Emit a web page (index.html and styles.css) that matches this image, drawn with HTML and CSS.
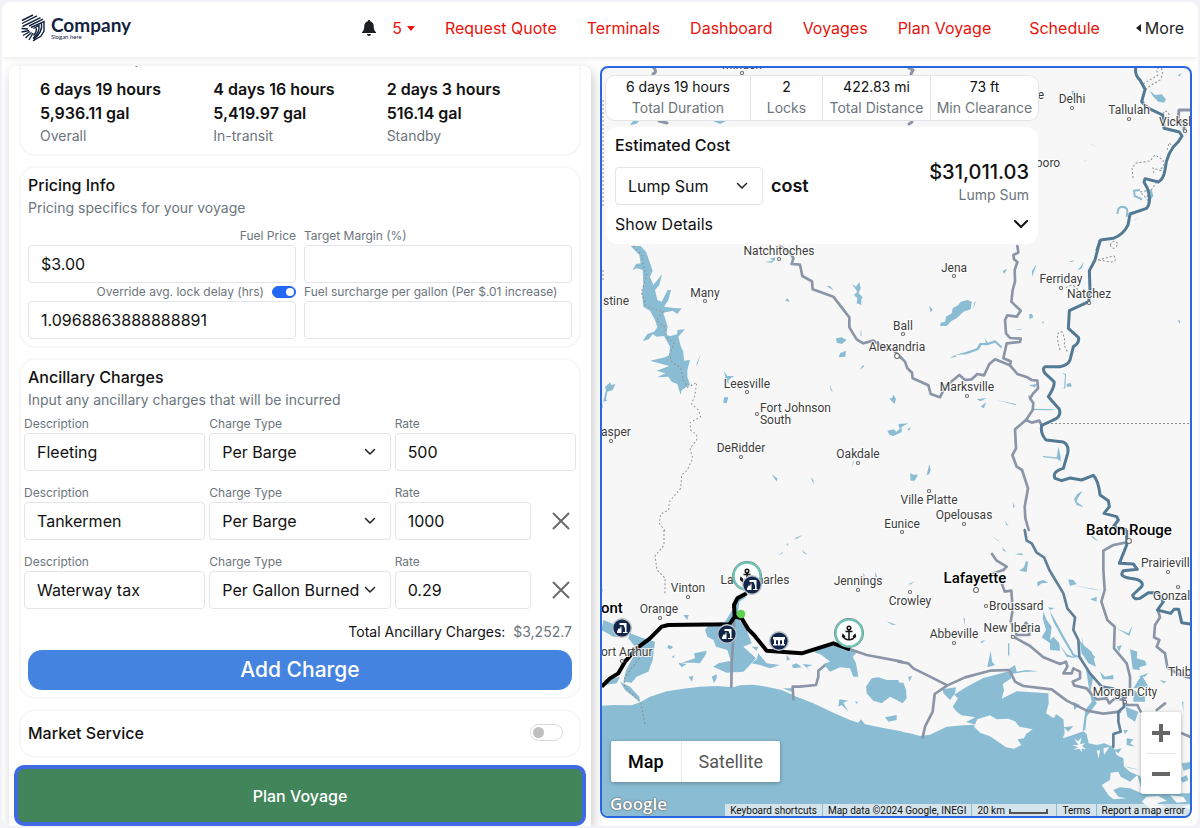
FILE: index.html
```html
<!DOCTYPE html>
<html lang="en">
<head>
    <meta charset="UTF-8">
    <meta name="viewport" content="width=device-width, initial-scale=1.0">
    <title>Plan Voyage</title>
    <link rel="stylesheet" href="styles.css">
</head>
<body>
    <div class="app">
        <header class="navbar">
            <a class="brand" href="#">
                <svg class="brand-mark" viewBox="0 0 26 28" fill="none" stroke="#14233f" stroke-width="1.4">
                    <path d="M2 6.500 13 1M2 9.500 17 1.800M2.500 12.500 20.500 3.600M9 12 23 5.200M1.500 14.500 8 15M1.500 18 9 16.500M3 21.500 10 17.500M5.500 24 11.500 18.500M9 26 13 19"/>
                    <path d="M11 13.500 24 7.500V17L21 22 13 27M13.500 14.500 19 11.500Q20 18 13 24.500M21.500 9.500Q23 18 13.500 25.500M16 14Q17.500 17 13.500 21.500"/>
                </svg>
                <span class="brand-text">
                    <span class="brand-name">Company</span>
                    <span class="brand-slogan">Slogan here</span>
                </span>
            </a>
            <nav class="nav-links">
                <a class="nav-alerts" href="#">
                    <svg class="bell" viewBox="0 0 14 16"><path d="M7 0c.7 0 1.200.5 1.200 1.200C10.500 1.800 11.600 3.500 11.700 6c.1 3 .6 4.700 2.300 6.200V13H0v-.8C1.700 10.700 2.200 9 2.300 6c.1-2.500 1.200-4.200 3.500-4.800C5.800.5 6.300 0 7 0zM5 14h4c0 1-.9 2-2 2s-2-1-2-2z" fill="#1c1f23"/></svg>
                    <span>5</span>
                    <svg class="caret" viewBox="0 0 8 5"><path d="M0 0h8L4 5z" fill="#e8120c"/></svg>
                </a>
                <a href="#">Request Quote</a>
                <a href="#">Terminals</a>
                <a href="#">Dashboard</a>
                <a href="#">Voyages</a>
                <a href="#">Plan Voyage</a>
                <a class="nav-schedule" href="#">Schedule</a>
                <a class="nav-more" href="#"><svg class="caret-left" viewBox="0 0 5 8"><path d="M5 0v8L0 4z" fill="#1c1f23"/></svg>More</a>
            </nav>
        </header>

        <main class="workspace">
            <section class="planner">
                <div class="card summary">
                    <h2 class="card-title">Time Summary</h2>
                    <div class="summary-grid">
                        <div><strong>6 days 19 hours</strong><strong>5,936.11 gal</strong><span>Overall</span></div>
                        <div><strong>4 days 16 hours</strong><strong>5,419.97 gal</strong><span>In-transit</span></div>
                        <div><strong>2 days 3 hours</strong><strong>516.14 gal</strong><span>Standby</span></div>
                    </div>
                </div>

                <div class="card pricing">
                    <h2 class="card-title">Pricing Info</h2>
                    <p class="card-hint">Pricing specifics for your voyage</p>
                    <div class="pricing-grid">
                        <div class="field">
                            <div class="field-head end"><label for="fuel-price">Fuel Price</label></div>
                            <input class="control" id="fuel-price" type="text" value="$3.00">
                        </div>
                        <div class="field">
                            <div class="field-head"><label for="margin">Target Margin (%)</label></div>
                            <input class="control" id="margin" type="text">
                        </div>
                        <div class="field">
                            <div class="field-head end">
                                <label for="lock-delay">Override avg. lock delay (hrs)</label>
                                <input class="switch small" type="checkbox" aria-label="Override lock delay" checked>
                            </div>
                            <input class="control" id="lock-delay" type="text" value="1.0968863888888891">
                        </div>
                        <div class="field">
                            <div class="field-head"><label for="surcharge">Fuel surcharge per gallon (Per $.01 increase)</label></div>
                            <input class="control" id="surcharge" type="text">
                        </div>
                    </div>
                </div>

                <div class="card ancillary">
                    <h2 class="card-title">Ancillary Charges</h2>
                    <p class="card-hint">Input any ancillary charges that will be incurred</p>
                    <div class="charges">
                        <div class="charge-row">
                            <div class="field">
                                <label for="desc-1">Description</label>
                                <input class="control" id="desc-1" type="text" value="Fleeting">
                            </div>
                            <div class="field">
                                <label for="type-1">Charge Type</label>
                                <select class="control" id="type-1"><option>Per Barge</option><option>Per Gallon Burned</option></select>
                            </div>
                            <div class="field">
                                <label for="rate-1">Rate</label>
                                <input class="control" id="rate-1" type="text" value="500">
                            </div>
                        </div>
                        <div class="charge-row">
                            <div class="field">
                                <label for="desc-2">Description</label>
                                <input class="control" id="desc-2" type="text" value="Tankermen">
                            </div>
                            <div class="field">
                                <label for="type-2">Charge Type</label>
                                <select class="control" id="type-2"><option>Per Barge</option><option>Per Gallon Burned</option></select>
                            </div>
                            <div class="rate-cell">
                                <div class="field">
                                    <label for="rate-2">Rate</label>
                                    <input class="control" id="rate-2" type="text" value="1000">
                                </div>
                                <button class="remove" type="button" aria-label="Remove charge">
                                    <svg viewBox="0 0 18 18"><path d="M1.500 1.500 16.500 16.500M16.500 1.500 1.500 16.500" stroke="#6c6c6c" stroke-width="2" stroke-linecap="round"/></svg>
                                </button>
                            </div>
                        </div>
                        <div class="charge-row">
                            <div class="field">
                                <label for="desc-3">Description</label>
                                <input class="control" id="desc-3" type="text" value="Waterway tax">
                            </div>
                            <div class="field">
                                <label for="type-3">Charge Type</label>
                                <select class="control" id="type-3"><option>Per Gallon Burned</option><option>Per Barge</option></select>
                            </div>
                            <div class="rate-cell">
                                <div class="field">
                                    <label for="rate-3">Rate</label>
                                    <input class="control" id="rate-3" type="text" value="0.29">
                                </div>
                                <button class="remove" type="button" aria-label="Remove charge">
                                    <svg viewBox="0 0 18 18"><path d="M1.500 1.500 16.500 16.500M16.500 1.500 1.500 16.500" stroke="#6c6c6c" stroke-width="2" stroke-linecap="round"/></svg>
                                </button>
                            </div>
                        </div>
                    </div>
                    <p class="charges-total">Total Ancillary Charges: <span>$3,252.7</span></p>
                    <button class="add-charge" type="button">Add Charge</button>
                </div>

                <div class="card market">
                    <label class="card-title" for="market-service">Market Service</label>
                    <input class="switch" id="market-service" type="checkbox">
                </div>

                <button class="plan-voyage" type="button">Plan Voyage</button>
            </section>

            <section class="map">
                <svg class="map-canvas" viewBox="602 68 588 748" preserveAspectRatio="xMidYMid slice">
                    <!-- open water -->
                    <g class="water">
                        <g transform="translate(600 530) scale(.33333)">
                            <path d="M0 528 40 525 95 526 122 516 150 500 200 484 250 476 300 470 350 468 400 472 420 466 460 464 500 470 545 480 590 500 640 520 700 548 750 570 775 578 783 568 795 583 850 594 905 604 905 894H0z"/>
                            <path d="M90 310 130 325 165 335 158 390 145 425 110 440 95 458 70 455 78 420 100 380 105 350 85 325z"/>
                            <path d="M330 280 375 275 400 235 415 195 440 200 418 215 412 260 440 300 455 340 430 350 468 385 445 410 430 425 380 428 340 410 355 400 392 392 382 360 348 350 340 330 322 320 315 300z"/>
                            <path d="M640 365 690 345 775 362 758 380 768 400 775 440 760 440 750 415 720 412 690 425 670 402 690 395 665 375z"/>
                            <path d="M798 470 815 445 835 442 860 450 895 450 905 475 900 515 870 500 845 520 820 512 800 490zM855 562 890 555 890 570 865 575z"/>
                            <path d="M10 270 60 290 80 320 40 320 5 300zM14 450 60 440 50 460 15 465zM60 455 90 470 118 500 120 515 100 500 75 480zM250 255 266 255 262 270zM205 345 220 350 212 358 202 354zM282 370 320 362 318 372 300 400 275 398 245 398 285 385zM235 398 260 402 245 412 240 406zM265 440 280 438 276 455zM335 440 350 432 350 445 342 460zM475 370 500 400 540 405 510 415 480 405 455 400 470 388zM560 375 570 388 560 392zM575 405 590 400 605 412 580 415zM608 402 638 405 620 412 632 425zM718 508 745 512 730 518 745 545 725 525 715 530zM765 515 775 515 770 522zM455 350 475 350 470 362zM215 380 225 376 220 385zM548 475 580 475 575 485z"/>
                            <path d="M535 75 550 65 545 72zM562 38 566 48 560 44zM583 25 608 15 590 27zM605 58 622 74 612 70zM0 175 8 178 6 192 0 188zM790 128 794 138 790 140zM826 125 832 142 826 140zM860 274 890 285 875 284z"/>
                        </g>
                        <g transform="translate(900 530) scale(.33333)">
                            <path d="M-5 604 30 610 60 618 90 614 140 590 190 586 228 584 198 576 226 562 185 556 170 545 158 530 174 505 162 494 200 470 250 444 310 428 330 424 334 445 308 462 312 480 305 506 350 484 445 490 446 520 438 550 462 565 468 552 490 568 494 610 488 625 510 618 550 604 560 612 566 640 590 645 612 640 640 650 650 675 670 685 672 710 690 725 720 738 740 790 900 790 900 894H-5z"/>
                            <path d="M-5 458 10 458 18 480 20 505 8 520-5 512zM128 478 168 472 165 490 150 510 130 490zM430 245 440 270 455 290 450 330 460 320 478 340 480 362 450 360 450 340 425 322 438 300 428 265zM538 330 550 345 575 365 588 410 565 400 545 370zM690 358 712 365 710 385 735 392 740 405 718 412 720 420 698 418zM676 530 715 545 705 575 682 560zM715 440 745 428 735 440zM600 425 615 440 640 435 640 448 608 448zM700 480 735 500 735 515 700 515zM845 700 875 695 875 715 850 722zM840 745 860 735 865 750 848 758zM725 435 745 470 700 475z"/>
                            <path d="M378 92 384 96 380 126 358 122 372 112zM505 148 520 150 530 162 510 168zM412 155 430 150 445 158 425 160 412 170zM343 72 366 70 368 76zM25 162 46 154 30 164zM275 18 302 36 290 30zM305 50 320 66 310 62zM568 10 596 34 580 26zM520 165 575 178 610 182 570 175zM570 208 590 200 590 215zM444 232 464 234 450 240zM650 295 685 310 698 285 688 318zM264 400 272 362 276 395 285 405 262 412zM324 340 328 340 328 380 324 375zM330 415 345 405 350 425 380 420 415 424 370 426 335 432zM190 265 194 265 196 290zM240 335 255 330 246 340zM545 320 552 350 585 380 580 390 550 365zM650 350 665 345 658 365zM25 440 36 438 28 455zM846 515 850 515 850 545zM780 450 800 455 790 460zM448 240 465 270 495 325 522 372 550 385 520 380 490 330 460 275zM480 345 500 372 530 385 500 380z"/>
                            <path d="M558 418 580 440 572 480 590 520 560 560 556 600 548 602 556 540 575 515 566 470zM520 515 540 525 522 540zM490 592 520 588 505 605zM670 600 685 600 675 612zM680 625 700 628 690 640 705 650 680 645zM640 660 665 655 655 670zM672 708 720 720 690 715zM668 765 700 760 700 775z"/>
                        </g>
                        <g transform="translate(600 240) scale(.33333)">
                            <path d="M92 18 122 18 138 35 158 92 150 110 160 135 186 103 178 135 165 150 172 180 185 185 203 150 213 150 205 180 192 200 230 205 245 205 232 222 218 212 190 218 203 260 198 285 212 288 232 282 232 270 255 268 235 290 242 318 250 335 252 362 270 360 262 390 262 410 270 435 245 450 242 464 238 452 232 432 215 425 205 410 172 412 196 400 170 392 198 382 208 378 150 362 195 352 208 345 210 320 192 288 170 290 158 282 146 298 128 304 142 282 162 275 172 262 165 240 150 212 130 200 126 160 130 130 128 90 110 85 98 90 108 72 122 70 118 45z"/>
                            <path d="M5 505 18 450 15 440 26 432 30 425 34 435 46 432 38 450 22 455 18 478 22 482 10 485 8 505zM372 392 382 408 402 408 386 420 385 432 378 420zM372 472 385 472 380 490 370 488zM708 295 725 292 740 300 725 312 710 308zM720 340 738 332 736 350 716 352zM756 132 768 140 778 126 782 145 776 160 788 172 784 178 784 195 770 190 772 175 762 165 772 155zM680 138 690 138 702 152zM555 182 562 175 570 185zM495 66 520 62 510 56 525 52 525 60 515 68zM783 268 785 290 781 285zM778 390 790 374 792 380zM690 434 698 456 692 450zM868 476 876 474 880 464 888 476 884 492zM862 572 880 568 890 575 905 560 905 576 880 588 868 584zM515 703 532 715 530 725zM632 712 640 720 641 734zM754 686 760 662 762 664zM302 342 288 375 293 372z"/>
                        </g>
                        <g transform="translate(900 240) scale(.33333)">
                            <path d="M120 258 122 248 135 245 138 230 155 220 158 205 175 195 182 185 202 180 215 185 212 208 190 215 170 235 155 242 140 258zM222 190 228 182 220 206zM88 198 98 208 92 218zM308 92 322 86 312 102zM407 75 408 78 396 110 396 92zM506 65 524 60 516 66zM532 92 552 66 545 85zM388 222 396 222 400 232 388 238zM424 250 432 242 430 250zM345 268 368 266 360 269zM150 354 165 345 170 350zM165 345 200 335 230 325 238 310 258 308 254 295 264 308 285 300 305 318 305 326 285 308 262 316 245 315 235 330 200 343zM500 432 512 428 515 440 500 440zM480 448 492 445 495 405 485 400 498 402 496 445zM485 395 495 392zM230 478 260 474 242 484zM242 500 258 486 252 505zM290 480 348 492 345 495zM395 506 470 508 450 511 398 510zM-5 552 25 550-2 565zM22 568 32 560 28 572zM30 700 40 704 54 704 44 722 32 722zM80 705 88 672 92 690 88 702zM428 648 470 652 475 620 482 650 482 664 470 656 430 652zM522 778 532 762 548 752 532 776 530 785 552 802 530 795zM338 785 344 800 340 805zM313 840 326 858 320 856zM832 240 840 242 840 252zM386 436 410 432 405 442zM385 465 394 470 386 475z"/>
                        </g>
                        <g transform="translate(1030 60) scale(.33333)">
                            <path d="M358 92 375 105 395 103 408 118 402 128 385 125 370 110zM125 92 136 95 135 105 126 104zM174 250 202 260 188 256zM158 304 175 299 162 304zM444 46 455 38 448 50zM316 478 322 472 312 485zM388 325 400 320 395 328zM350 382 366 392 370 408 360 422 355 418 362 400z"/>
                            <path class="oxbow" d="M330 390 312 392 314 408 336 418M350 420 360 418M262 462Q262 440 278 440 298 442 290 470"/>
                        </g>
                        <path d="M633 121 639 121 636 124 630 125zM713 121 726 121 720 124zM973 74 976 76z"/>
                    </g>

                    <!-- islands and marsh -->
                    <g class="land">
                        <g transform="translate(900 530) scale(.33333)">
                            <path d="M222 590 232 568 270 556 290 568 325 566 345 574 358 590 398 598 378 612 372 625 352 628 364 645 342 656 318 652 290 632 268 618 240 608z"/>
                            <path d="M522 625 535 645 516 645 534 652 520 660 538 656 545 666 545 656 558 658 546 648 556 640 540 642 545 622 534 634zM590 662 600 660 596 685zM610 655 628 650 612 675zM605 765 630 750 632 728 655 725 662 740 690 755 712 735 722 770 725 790 690 775 660 772 640 780 655 800 680 805 640 808 625 795zM740 800 775 798 800 812 770 820 800 832 750 835 725 815zM810 796 850 800 860 815 830 818zM845 830 872 824 872 838z"/>
                        </g>
                    </g>

                    <!-- borders -->
                    <g class="border">
                        <path d="M603 100V206M603 270V280"/>
                        <g transform="translate(600 240) scale(.33333)">
                            <path d="M100 18 128 50 130 80 140 105 124 158 140 200 170 210 190 215 170 240 195 262 200 290 222 310 208 345 215 365 242 385 250 420 262 442 290 428 285 465 275 492 295 510 302 530 270 548 272 570 290 585 290 600 270 625 278 655 262 690 245 705 242 745 208 785 206 810 182 822 178 850 195 872"/>
                        </g>
                        <path d="M664 530 664 545 655 556 657 570 665 578 665 595M642 655 625 677 624 685 636 698 641 703 645 725M1047 423.500H1190"/>
                        <path d="M1143 84 1158 75Q1155 67 1160 68 1165 70 1160 80 1152 84 1145 90M1163 114Q1164 108 1169 114V122M1133 178 1132 168 1136 163 1150 161 1155 155 1163 160 1165 172 1153 168 1154 175M1167 150 1169 143 1175 148M1150 190 1140 192 1146 198 1158 180M1110 245Q1114 238 1118 244 1114 252 1110 245M1098 260 1114 256Q1118 262 1110 262zM1066 288Q1072 282 1078 290M1060 350Q1054 330 1062 332 1066 340 1064 345L1068 353"/>
                    </g>

                    <!-- waterways -->
                    <g class="river">
                        <path d="M653 67Q658 72 653 74M909 68 913 70 911 74M909 124 912 122M659 121 667 123M1190 110 1179 110 1178 120 1184 122V130"/>
                        <g transform="translate(600 240) scale(.33333)">
                            <path d="M540 18 572 40 580 55 575 72 600 74 607 108 636 124 638 148 700 170 748 232 748 262 770 298 790 310 820 302 850 322 880 330 905 355"/>
                        </g>
                        <g transform="translate(900 240) scale(.33333)">
                            <path d="M0 350 15 365 22 385 36 398 38 415 85 436 92 462 120 472 135 440 178 405 195 420 215 418 232 402 252 406 268 372 285 358 330 376 352 402 382 412 395 420 412 422 414 445 400 460 390 475 400 490 398 510 378 540 345 568 348 625 337 645 350 680 366 690 384 745 374 800 376 835 386 870"/>
                            <path d="M352 18 355 38 340 45 342 58 352 66 344 90 345 125 338 150 334 185 362 212 350 230 322 226 315 240 318 280 330 294 362 296 360 306 320 310 310 355 332 364 330 376M378 540 395 548 418 542 425 556"/>
                        </g>
                        <g transform="translate(600 530) scale(.33333)">
                            <path d="M403 275 395 400 394 470M750 358 800 375 905 395M672 408 655 422 655 440 648 465 600 470 578 470 580 508"/>
                        </g>
                        <g transform="translate(900 530) scale(.33333)">
                            <path d="M-5 395 25 400 40 415 90 440 142 466 195 442 270 422 328 420 345 455 370 468 455 478 500 512 560 542 610 551 660 545M142 466 104 492 98 545 75 590 68 622"/>
                            <path d="M276 72 290 92 320 110 310 120 280 130 300 145 314 185 334 182 338 240 332 275 345 300 350 315 388 315 386 290 378 278 366 300M336 318 390 348 430 382 480 402 498 395 502 410 490 430 515 430 520 415 540 425 540 445 518 455 522 466 560 475 572 490 590 508 620 505 628 520 645 505 672 510"/>
                            <path class="deep" d="M374 0 380 32 395 40 410 68 432 82 448 120 490 190 502 235 525 262 520 300 535 330 538 380 570 430 605 470 640 476 670 500 672 530 655 545 655 575 662 605 640 612 640 650"/>
                            <path d="M676 38 640 45 610 62 610 120 614 180 604 215 622 270 644 290 642 355 680 400 690 440 690 480 672 510 680 525 712 525 722 545M875 445 840 435 802 412 795 370 770 350 778 330 762 322 765 285 780 262 775 245M770 540 795 520M845 610 870 620"/>
                        </g>
                    </g>
                    <g class="mississippi">
                        <g transform="translate(1030 60) scale(.33333)">
                            <path d="M318 18Q312 45 330 60L345 88 335 125Q345 140 362 148L398 165 402 205 448 216 456 228 445 245Q410 275 405 330 400 358 385 366L345 356 342 366 352 385Q366 425 350 445L300 462 294 495Q280 525 250 535L212 540 200 572"/>
                        </g>
                        <g transform="translate(900 240) scale(.33333)">
                            <path d="M600 0 585 60 568 92 570 150 566 185 508 212 505 265 535 292Q540 308 520 320L510 360Q505 375 480 380L436 380Q425 385 435 400L462 425Q465 440 445 470L478 508Q485 530 460 540L425 556Q420 580 438 600L490 606Q508 615 503 640L490 685Q455 695 465 715L485 722 510 714 545 720 580 706Q595 720 600 765L625 782 628 800 612 820 650 830 655 840 640 860 670 866 680 870"/>
                        </g>
                        <g transform="translate(900 530) scale(.33333)">
                            <path d="M680 0 680 45 658 100 700 102 712 118 670 122Q655 140 690 145 735 150 725 170L698 195Q700 210 720 205L745 188 775 188 790 215 772 240 812 250 822 238 836 238 845 278 872 282"/>
                        </g>
                    </g>

                    <!-- planned route -->
                    <g transform="translate(600 530) scale(.33333)">
                        <path class="route" d="M5 470 30 445 55 430 75 395 110 355 150 325 185 290 205 285 388 283 404 260 402 225 412 205 440 190M404 260 425 265 445 298 462 315 500 362 605 370 700 340 750 358"/>
                    </g>

                    <g class="town-dots">
                        <circle cx="742" cy="73" r="1.600"/><circle cx="1072" cy="108" r="1.600"/><circle cx="1129" cy="119" r="1.600"/><circle cx="1185" cy="131" r="1.600"/>
                        <circle cx="779" cy="259" r="1.600"/><circle cx="954" cy="276" r="1.600"/><circle cx="705" cy="301" r="1.600"/><circle cx="1061" cy="288" r="1.600"/><circle cx="1089" cy="303" r="1.600"/>
                        <circle cx="903" cy="334" r="1.600"/><circle cx="897" cy="356" r="2.400"/><circle cx="747" cy="392" r="1.600"/><circle cx="967" cy="396" r="1.600"/><circle cx="757" cy="414" r="1.600"/>
                        <circle cx="611" cy="441" r="1.600"/><circle cx="741" cy="457" r="1.600"/><circle cx="858" cy="463" r="1.600"/><circle cx="929" cy="491" r="1.600"/><circle cx="964" cy="524" r="1.600"/><circle cx="902" cy="532" r="1.600"/>
                        <circle cx="1129" cy="541" r="2.400"/><circle cx="1168" cy="572" r="1.600"/><circle cx="1178" cy="587" r="1.600"/><circle cx="858" cy="590" r="1.600"/><circle cx="910" cy="592" r="1.600"/><circle cx="976" cy="590" r="2.400"/>
                        <circle cx="688" cy="597" r="1.600"/><circle cx="660" cy="618" r="1.600"/><circle cx="986" cy="606" r="1.600"/><circle cx="954" cy="643" r="1.600"/><circle cx="1013" cy="637" r="1.600"/><circle cx="622" cy="661" r="1.600"/><circle cx="1125" cy="702" r="1.600"/>
                    </g>
                    <g class="town">
                        <text x="742" y="69">Minden</text><text x="1041" y="99">e</text><text x="1072" y="103">Delhi</text>
                        <text x="1129" y="114">Tallulah</text><text class="from" x="1159" y="126">Vicksburg</text><text x="1048" y="167">boro</text>
                        <text x="779" y="255">Natchitoches</text><text x="954" y="272">Jena</text><text x="705" y="297">Many</text>
                        <text class="from" x="603" y="305">stine</text><text x="1061" y="283">Ferriday</text><text x="1089" y="298">Natchez</text>
                        <text x="903" y="330">Ball</text><text x="897" y="351">Alexandria</text><text x="747" y="388">Leesville</text>
                        <text x="967" y="391">Marksville</text><text class="from" x="760" y="412">Fort Johnson</text><text class="from" x="760" y="424">South</text>
                        <text class="from" x="601" y="436">asper</text><text x="741" y="452">DeRidder</text><text x="858" y="458">Oakdale</text>
                        <text x="929" y="504">Ville Platte</text><text x="964" y="519">Opelousas</text><text x="902" y="528">Eunice</text>
                        <text class="from" x="1141" y="567">Prairieville</text><text class="from" x="1153" y="600">Gonzales</text>
                        <text x="755" y="584">Lake Charles</text><text x="858" y="585">Jennings</text><text x="910" y="605">Crowley</text>
                        <text x="688" y="592">Vinton</text><text x="659" y="613">Orange</text><text class="from" x="989" y="610">Broussard</text>
                        <text x="954" y="638">Abbeville</text><text x="1012" y="632">New Iberia</text><text class="from" x="601" y="656">ort Arthur</text>
                        <text class="from" x="1168" y="676">Thibodaux</text><text x="1125" y="696">Morgan City</text>
                    </g>
                    <g class="town city">
                        <text x="1129" y="535">Baton Rouge</text><text x="975" y="583">Lafayette</text><text class="from" x="601" y="613">ont</text>
                    </g>

                    <defs>
                        <g id="port">
                            <circle r="14.500" fill="#fff" stroke="#6f8f8d"/>
                            <circle r="13.300" fill="none" stroke="#6cc5b4" stroke-width="2"/>
                            <path d="M0-3V6.500M-3.500-1.500H3.500M-6 2.500Q-5 6.500 0 6.800 5 6.500 6 2.500M-6.500 4.500-6 1.800-4 3.800M6.500 4.500 6 1.800 4 3.800" fill="none" stroke="#111" stroke-width="1.500"/>
                            <circle cy="-5" r="1.800" fill="none" stroke="#111" stroke-width="1.500"/>
                        </g>
                        <g id="lock">
                            <circle r="9.300" fill="#12264a" stroke="#b9c0ca" stroke-width="1.400"/>
                            <path d="M-5 5V3.500L-3.500.5H-1.500V-1.500H-.5V5zM-2.500-5H4.500V4H5.500V5H1V4H3V.5L1.500-3H-2.500z" fill="#fff"/>
                        </g>
                        <g id="bridge">
                            <circle r="9.300" fill="#12264a" stroke="#b9c0ca" stroke-width="1.400"/>
                            <path d="M-6-4H6V-1.500H5V3H6V4.500H2V3H3V-.5Q1.500-1.500 1 0V3H1.500V4.500H-1.500V3H-1V0Q-1.500-1.500-3-.5V3H-2V4.500H-6V3H-5V-1.500H-6z" fill="#fff"/>
                        </g>
                    </defs>
                    <use href="#port" x="747" y="576"/>
                    <use href="#port" x="849" y="633"/>
                    <use href="#lock" x="752" y="585"/>
                    <use href="#lock" x="622" y="628"/>
                    <use href="#lock" x="727" y="634"/>
                    <use href="#bridge" x="779" y="641"/>
                    <circle cx="741" cy="614" r="4.300" fill="#5fd34f"/>
                </svg>

                <div class="map-overlay">
                    <div class="stats">
                        <div><span>6 days 19 hours</span><small>Total Duration</small></div>
                        <div><span>2</span><small>Locks</small></div>
                        <div><span>422.83 mi</span><small>Total Distance</small></div>
                        <div><span>73 ft</span><small>Min Clearance</small></div>
                    </div>
                    <div class="cost-card">
                        <h2 class="cost-title">Estimated Cost</h2>
                        <div class="cost-row">
                            <select class="control cost-type" id="cost-type"><option>Lump Sum</option></select>
                            <label class="cost-label" for="cost-type">cost</label>
                            <div class="cost-total"><strong>$31,011.03</strong><span>Lump Sum</span></div>
                        </div>
                        <button class="details" type="button">Show Details
                            <svg viewBox="0 0 16 10"><path d="M2 2 8 8 14 2" fill="none" stroke="#111" stroke-width="2" stroke-linecap="round" stroke-linejoin="round"/></svg>
                        </button>
                    </div>
                </div>

                <div class="map-type">
                    <button class="active" type="button">Map</button>
                    <button type="button">Satellite</button>
                </div>
                <div class="zoom">
                    <button type="button" aria-label="Zoom in"><svg viewBox="0 0 18 18"><path d="M0 9H18M9 0V18" stroke="#666" stroke-width="4"/></svg></button>
                    <button type="button" aria-label="Zoom out"><svg viewBox="0 0 18 18"><path d="M0 9H18" stroke="#666" stroke-width="4"/></svg></button>
                </div>
                <span class="google">Google</span>
                <div class="attribution">
                    <a href="#">Keyboard shortcuts</a>
                    <span>Map data ©2024 Google, INEGI</span>
                    <span class="scale">20 km <i></i></span>
                    <a href="#">Terms</a>
                    <a href="#">Report a map error</a>
                </div>
            </section>
        </main>
    </div>
</body>
</html>
```

FILE: styles.css
```css
* {
    margin: 0;
    padding: 0;
    box-sizing: border-box;
}

body {
    background: #f2f2f8;
    color: #111;
    font-family: Inter, "Liberation Sans", sans-serif;
    font-size: 16px;
    line-height: 24px;
}

a {
    color: inherit;
    text-decoration: none;
}

button, input, select {
    font: inherit;
    color: inherit;
}

.app {
    height: 100vh;
    border: 2px solid #f2f2f8;
    border-radius: 10px;
    background: #fff;
    display: flex;
    flex-direction: column;
    overflow: hidden;
}

/* header */
.navbar {
    height: 55px;
    flex-shrink: 0;
    padding: 0 14px 3px 18px;
    display: flex;
    align-items: center;
    justify-content: space-between;
    box-shadow: 0 1px 5px rgba(0, 0, 0, 0.1);
}

.brand {
    display: flex;
    align-items: center;
    gap: 5px;
    color: #14233f;
}

.brand-mark {
    width: 26px;
    height: 28px;
}

.brand-text {
    display: flex;
    flex-direction: column;
    font-family: Lato, sans-serif;
}

.brand-name {
    font-size: 19px;
    font-weight: bold;
    line-height: 18px;
}

.brand-slogan {
    font-size: 6px;
    line-height: 6px;
}

.nav-links {
    display: flex;
    align-items: center;
    gap: 30px;
    color: #e8120c;
}

.nav-alerts {
    display: flex;
    align-items: center;
    gap: 5px;
}

.bell {
    width: 14px;
    height: 16px;
    margin-right: 11px;
}

.caret {
    width: 8px;
    height: 5px;
}

.nav-schedule {
    margin: 0 6px 0 8px;
}

.nav-more {
    display: flex;
    align-items: center;
    gap: 4px;
    color: #1c1f23;
}

.caret-left {
    width: 5px;
    height: 8px;
}

.workspace {
    flex: 1;
    min-height: 0;
    display: grid;
    grid-template-columns: 58fr 59fr;
    gap: 9px;
    padding: 9px 6px 0 7px;
}

/* left column */
.planner {
    display: flex;
    flex-direction: column;
    justify-content: flex-end;
    gap: 10px;
    padding: 0 10px;
    overflow: hidden;
    border-radius: 8px 8px 0 0;
    background: #fff;
    box-shadow: 2px 4px 12px rgba(0, 0, 0, 0.22);
}

.card {
    flex-shrink: 0;
    border: 2px solid #f7f7f8;
    border-radius: 16px;
    padding: 5px 7px 7px;
}

.card-title {
    display: block;
    font-size: 16px;
    font-weight: 500;
    line-height: 24px;
}

.card-hint {
    font-size: 14px;
    line-height: 21px;
    color: #6c757d;
}

.summary {
    padding-bottom: 8px;
}

.summary-grid {
    display: grid;
    grid-template-columns: repeat(3, 1fr);
    margin-top: 8px;
    padding: 0 12px;
}

.summary-grid div {
    display: flex;
    flex-direction: column;
}

.summary-grid strong {
    font-weight: 600;
}

.summary-grid span {
    font-size: 14px;
    line-height: 21px;
    color: #6c757d;
}

.pricing-grid {
    display: grid;
    grid-template-columns: 1fr 1fr;
    column-gap: 8px;
    margin-top: 9px;
}

.field {
    display: flex;
    flex-direction: column;
    min-width: 0;
}

.field label {
    font-size: 12px;
    line-height: 18px;
    color: #6c757d;
}

.field-head {
    display: flex;
    align-items: center;
    gap: 8px;
}

.field-head.end {
    justify-content: flex-end;
}

.control {
    width: 100%;
    height: 38px;
    padding: 0 12px;
    border: 1px solid #e3e5e8;
    border-radius: 4px;
    background: #fff;
}

select.control {
    appearance: none;
    padding-right: 28px;
    background: #fff url("data:image/svg+xml,%3Csvg xmlns='http://www.w3.org/2000/svg' viewBox='0 0 12 8'%3E%3Cpath d='M1.500 1.500 6 6 10.500 1.500' fill='none' stroke='%23222' stroke-width='1.500' stroke-linecap='round' stroke-linejoin='round'/%3E%3C/svg%3E") no-repeat right 14px center / 12px 8px;
}

.switch {
    appearance: none;
    width: 33px;
    height: 17px;
    padding: 2px;
    border: 1px solid #d9d9db;
    border-radius: 9px;
    background: #fff;
}

.switch::before {
    content: "";
    display: block;
    width: 11px;
    height: 11px;
    border-radius: 50%;
    background: #bfbfbf;
}

.switch.small {
    width: 24px;
    height: 12px;
    padding: 1px;
}

.switch.small::before {
    width: 8px;
    height: 8px;
}

.switch:checked {
    border-color: #2468f2;
    background: #2468f2;
}

.switch:checked::before {
    margin-left: auto;
    background: #fff;
}

.charges {
    display: flex;
    flex-direction: column;
    gap: 13px;
    margin: 5px -4px 0;
}

.charge-row {
    display: grid;
    grid-template-columns: repeat(3, 1fr);
    gap: 4px;
}

.rate-cell {
    display: grid;
    grid-template-columns: 3fr 1fr;
    align-items: end;
}

.remove {
    height: 38px;
    padding-left: 15px;
    border: none;
    background: none;
    cursor: pointer;
}

.remove svg {
    display: block;
    width: 18px;
    height: 18px;
    margin: 0 auto;
}

.charges-total {
    margin: 11px 0 6px;
    text-align: right;
    font-size: 14px;
}

.charges-total span {
    margin-left: 4px;
    color: #6c757d;
}

.add-charge {
    display: block;
    width: 100%;
    height: 40px;
    border: none;
    border-radius: 14px;
    background: #4484e0;
    color: #fff;
    font-size: 21px;
    font-weight: 500;
    cursor: pointer;
}

.market {
    display: flex;
    align-items: center;
    justify-content: space-between;
    height: 49px;
    padding-right: 16px;
}

.plan-voyage {
    flex-shrink: 0;
    height: 61px;
    margin: -3px -5px 0;
    border: 4px solid #4169e1;
    border-radius: 10px;
    background: #42855a;
    color: #fff;
    font-weight: 500;
    cursor: pointer;
}

/* map */
.map {
    position: relative;
    margin-bottom: 8px;
    border: 2px solid #2a66dd;
    border-radius: 8px;
    background: #f7f7f7;
    overflow: hidden;
    font-family: Roboto, sans-serif;
}

.map-canvas {
    display: block;
    width: 100%;
    height: 100%;
}

.water {
    fill: #8abdd3;
}

.oxbow {
    fill: none;
    stroke: #8abdd3;
    stroke-width: 6px;
}

.land {
    fill: #f7f7f7;
}

.border {
    fill: none;
    stroke: #8e8e8e;
    stroke-width: 1px;
    stroke-dasharray: 2 2;
}

.border g {
    stroke-width: 3px;
    stroke-dasharray: 5 7;
}

.river {
    fill: none;
    stroke: #8b95a8;
    stroke-width: 3px;
    stroke-linejoin: round;
    stroke-linecap: round;
}

.river g {
    stroke-width: 8px;
}

.river .deep {
    stroke: #60809a;
}

.mississippi {
    fill: none;
    stroke: #537a95;
    stroke-width: 9px;
    stroke-linejoin: round;
}

.route {
    fill: none;
    stroke: #000;
    stroke-width: 12px;
    stroke-linejoin: round;
}

.town-dots {
    fill: #fff;
    stroke: #666;
    stroke-width: 1px;
}

.town {
    font-size: 12px;
    fill: #3c3c3c;
    stroke: #fff;
    stroke-width: 2px;
    stroke-opacity: 0.8;
    paint-order: stroke;
    text-anchor: middle;
}

.town .from {
    text-anchor: start;
}

.city {
    font-size: 15px;
    font-weight: 500;
    fill: #000;
}

.map-overlay {
    position: absolute;
    top: 7px;
    left: 3px;
    width: 434px;
    font-family: Inter, sans-serif;
}

.stats {
    display: grid;
    grid-template-columns: 4fr 2fr 3fr 3fr;
    border: 1px solid #e4e4e8;
    border-radius: 10px;
    background: #fff;
    text-align: center;
    overflow: hidden;
}

.stats div {
    display: flex;
    flex-direction: column;
    border-left: 1px solid #e4e4e8;
    padding-bottom: 2px;
    font-size: 14px;
    line-height: 21px;
}

.stats div:first-child {
    border-left: none;
}

.stats small {
    font-size: 14px;
    color: #6c757d;
}

.cost-card {
    margin: 6px 1px 0;
    padding: 6px 9px;
    border-radius: 12px;
    background: #fff;
}

.cost-title {
    font-size: 16px;
    font-weight: 500;
}

.cost-row {
    display: flex;
    align-items: center;
    gap: 8px;
    margin-top: 3px;
    height: 52px;
}

.cost-row .cost-type {
    width: 148px;
}

.cost-label {
    font-size: 18px;
    font-weight: 600;
}

.cost-total {
    display: flex;
    flex-direction: column;
    margin-left: auto;
    padding-bottom: 8px;
    text-align: right;
}

.cost-total strong {
    font-size: 20px;
    font-weight: 500;
}

.cost-total span {
    font-size: 14px;
    line-height: 21px;
    color: #6c757d;
}

.details {
    display: flex;
    align-items: center;
    justify-content: space-between;
    width: 100%;
    padding-bottom: 2px;
    border: none;
    background: none;
    cursor: pointer;
}

.details svg {
    width: 16px;
    height: 10px;
}

.map-type {
    position: absolute;
    left: 9px;
    bottom: 34px;
    display: flex;
    height: 41px;
    border-radius: 2px;
    background: #fff;
    box-shadow: 0 1px 4px rgba(0, 0, 0, 0.3);
}

.map-type button {
    padding: 0 17px;
    border: none;
    background: none;
    font-size: 18px;
    color: #565656;
    cursor: pointer;
}

.map-type button + button {
    border-left: 1px solid #e6e6e6;
}

.map-type .active {
    font-weight: 500;
    color: #000;
}

.zoom {
    position: absolute;
    right: 9px;
    bottom: 22px;
    width: 40px;
    border-radius: 2px;
    background: #fff;
    box-shadow: 0 1px 4px rgba(0, 0, 0, 0.3);
}

.zoom button {
    display: flex;
    align-items: center;
    justify-content: center;
    width: 30px;
    height: 41px;
    margin: 0 auto;
    border: none;
    background: none;
    cursor: pointer;
}

.zoom button + button {
    border-top: 1px solid #e6e6e6;
}

.zoom svg {
    width: 18px;
    height: 18px;
}

.google {
    position: absolute;
    left: 8px;
    bottom: 0;
    font-family: "Open Sans", sans-serif;
    font-size: 17px;
    font-weight: 600;
    color: #fff;
    text-shadow: 0 0 2px #555, 0 0 1px #555;
}

.attribution {
    position: absolute;
    right: 0;
    bottom: 0;
    display: flex;
    gap: 1px;
    font-size: 10px;
    line-height: 10px;
    color: #111;
}

.attribution > * {
    padding: 2px 5px 0;
    background: rgba(245, 245, 245, 0.7);
    white-space: nowrap;
}

.attribution .scale {
    padding-right: 8px;
}

.scale i {
    display: inline-block;
    width: 39px;
    height: 5px;
    margin-left: 2px;
    border: 2px solid #555;
    border-top: none;
}
```
